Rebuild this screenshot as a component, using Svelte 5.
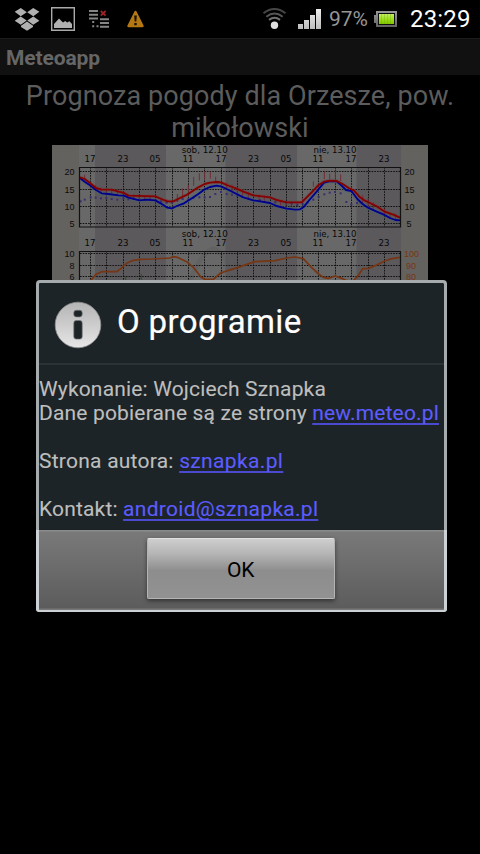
<script>
  const hours = [
    [90, '17'], [123, '23'], [155, '05'], [188, '11'], [221, '17'],
    [253.5, '23'], [286, '05'], [318, '11'], [351, '17'], [384, '23']
  ];
  const gridX = [90.5, 106.5, 123.5, 139.5, 155.5, 172.5, 188.5, 204.5, 221.5, 237.5, 253.5, 270.5, 286.5, 302.5, 318.5, 335.5, 351.5, 368.5, 384.5];
  const temps = [[171.5, '20'], [189.5, '15'], [206.5, '10'], [223.5, '5']];
  const humid = [[253.5, '10', '100'], [265.5, '8', '90'], [276.5, '6', '80']];

  // Curves are sampled at three units per pixel, measured from (40, 140).
  const red = '120,112 134,117 150,129 168,144 185,149 215,149 236,155 252,159 266,167 346,169 364,177 382,184 400,184 414,177 443,163 475,142 494,132 510,128 530,126 543,127 560,135 590,146 610,155 640,166 690,172 710,180 740,187 785,187 800,172 820,152 836,135 852,125 870,122 890,123 908,132 926,144 942,152 958,170 975,182 990,189 1010,199 1034,215 1060,224 1080,233';
  const blue = '120,114 134,125 150,136 168,150 185,160 205,162 236,166 252,167 266,173 298,181 320,179 346,181 362,190 382,203 396,205 410,198 432,190 451,178 475,162 494,148 510,141 530,137 543,139 560,147 590,162 610,172 640,181 690,189 710,198 740,206 765,209 780,208 790,202 808,180 830,155 852,128 870,123 890,124 904,136 918,150 934,153 952,177 968,192 984,203 1010,215 1030,223 1050,234 1066,240 1080,241';
  const orange = '150,424 168,403 185,395 230,395 240,388 260,370 280,361 300,358 340,357 390,354 400,350 412,352 440,365 460,382 482,410 494,418 520,418 542,399 575,388 595,382 620,373 645,365 705,362 740,354 765,351 790,356 812,380 836,402 850,412 865,415 885,408 908,416 920,422 938,424 952,410 968,386 986,385 1005,377 1034,363 1055,356 1080,352';
  const dots = [[122, 184], [134, 179], [152, 172], [167, 173], [183, 175], [199, 174], [215, 177], [232, 179], [250, 175], [265, 178], [281, 175], [298, 179], [314, 179], [330, 178], [347, 181], [363, 184], [380, 188], [395, 188], [412, 182], [428, 177], [445, 178], [460, 174], [478, 172], [494, 172], [510, 171], [526, 162], [543, 156], [560, 162], [576, 164], [592, 168], [625, 175], [660, 180], [706, 186], [738, 188], [755, 191], [772, 195], [788, 192], [803, 187], [820, 179], [836, 171], [853, 163], [869, 158], [885, 156], [902, 160], [919, 186], [934, 194], [951, 189]];
  const bars = [[134, 104, 117], [167, 136, 150], [183, 142, 155], [199, 148, 164], [215, 147, 166], [232, 148, 166], [281, 163, 180], [298, 168, 182], [314, 167, 182], [330, 167, 181], [365, 173, 188], [380, 178, 190], [412, 162, 178], [428, 145, 171], [445, 135, 163], [461, 111, 138], [478, 100, 122], [494, 93, 118], [511, 95, 116], [527, 110, 125], [560, 128, 145], [576, 134, 155], [592, 142, 162], [608, 148, 167], [625, 156, 175], [657, 164, 184], [673, 166, 188], [706, 174, 194], [722, 180, 197], [738, 183, 198], [754, 185, 199], [771, 186, 198], [788, 176, 190], [820, 124, 140], [853, 95, 117], [869, 101, 117], [886, 91, 119], [902, 103, 123], [934, 140, 155], [968, 166, 190], [984, 175, 202], [1000, 187, 208], [1034, 206, 224], [1050, 220, 237], [1066, 221, 239]];
</script>

<div class="screen">
  <header class="status">
    <svg width="260" height="38" viewBox="0 0 260 38">
      <g fill="#b0b0b0">
        <path d="M20.8 8 26.8 12.2 20.7 16.2 14.7 11.8zM33.2 8 27.2 12.2 33.3 16.2 39.4 11.8zM20.7 16.4 26.7 20.6 20.8 24.7 14.7 20.7zM33.3 16.4 27.3 20.6 33.2 24.7 39.4 20.7zM27 21.4 33 25.8V27L27 30.8 21 27V25.8z" />
        <path fill="none" stroke="#aaa" stroke-width="1.4" d="M51.7 7.7h22.6v22.6H51.7z" />
        <path d="M54 28v-4l5-5.5 4 4 2.2-1.4 2 1.3 2.2-1.2L72 24v4z" />
      </g>
      <path stroke="#858585" stroke-width="1.9" d="M89 11h9M89 14.8h9M89 18.5h9M100 19.3h9M100 23h9M100 26.7h9" />
      <path fill="#858585" d="M92.2 21h2v2h-2zM92.2 25.3h2v2h-2zM96.5 25.3h2v2h-2z" />
      <path d="m100.8 11 4.8 4.6M105.6 11 100.8 15.6" stroke="#982626" stroke-width="1.9" />
      <path d="M135.5 12 142.5 26h-14z" fill="#b47813" stroke="#b47813" stroke-width="2.4" stroke-linejoin="round" />
      <path d="M134.2 15.5h2.6l-.5 6h-1.6zM134.3 23h2.4v2.2h-2.4z" fill="#151000" />
    </svg>
    <svg width="64" height="38" viewBox="260 0 64 38">
      <defs>
        <linearGradient id="bar" x2="0" y2="1"><stop stop-color="#eee" /><stop offset="1" stop-color="#bbb" /></linearGradient>
      </defs>
      <g fill="none" stroke-width="2">
        <path d="M263.5 13.2q11-8.5 22 0" stroke="#464646" />
        <path d="M266.3 16.7q8.2-6.4 16.4 0" stroke="#555" />
        <path d="M269 19.9q5.5-4.2 11 0" stroke="#707070" />
      </g>
      <circle cx="274.5" cy="25.3" r="3.7" fill="#e0e0e0" />
      <path fill="url(#bar)" d="M298 24h5v5h-5zM304 20h5v9h-5zM310 15h5v14h-5zM316 9h5v20h-5z" />
    </svg>
    <span class="percent">97%</span>
    <svg width="24" height="38" viewBox="374 0 24 38">
      <defs>
        <linearGradient id="cell" x2="0" y2="1"><stop stop-color="#c5ee6a" /><stop offset=".5" stop-color="#9fdf1e" /><stop offset="1" stop-color="#83c400" /></linearGradient>
        <linearGradient id="case" x2="0" y2="1"><stop stop-color="#999" /><stop offset="1" stop-color="#626262" /></linearGradient>
      </defs>
      <path fill="url(#case)" d="M376 11h21v16h-21v-4h-2v-8h2z" />
      <path d="M378 13h17v12h-17z" fill="#101010" />
      <path d="M379 14h15v10h-15z" fill="url(#cell)" />
      <path d="M381.5 14v10M384.5 14v10M387.5 14v10M390.5 14v10" stroke="#6fae00" stroke-opacity=".35" />
    </svg>
    <span class="clock">23:29</span>
  </header>
  <div class="title">Meteoapp</div>
  <main>
    <h1>Prognoza pogody dla Orzesze, pow.<br />mikołowski</h1>
    <svg class="chart" width="376" height="140" viewBox="52 145 376 140">
      <path fill="#64625f" d="M52 145h376v140H52z" />
      <path fill="#686868" d="M79 145h322v140H79z" />
      <path fill="#5b595c" d="M95 145h71v140H95zM225.5 145h71.5v140h-71.5zM356.5 145h44.5v140h-44.5z" />
      <path d="M188 285q14-35 26-36 12 4 22 36" fill="none" stroke="#555" stroke-opacity=".3" stroke-width="5" />
      <g stroke="#111" stroke-width="1" stroke-dasharray="1.6 1.1">
        {#each gridX as x}<path d="M{x} 167v60M{x} 251v34" />{/each}
        {#each temps as [y]}<path d="M80 {y}h321" />{/each}
        {#each humid as [y]}<path d="M80 {y}h321" />{/each}
      </g>
      <g transform="translate(40 140) scale(.33333)" fill="none" stroke-linejoin="round">
        <polyline points={blue} stroke="#456575" stroke-opacity=".4" stroke-width="13" />
        <polyline points={red} stroke="#704444" stroke-opacity=".35" stroke-width="11" />
        {#each bars as [x, a, b]}<path d="M{x} {a}V{b}" stroke="#702d34" stroke-width="3" />{/each}
        {#each dots as [x, y]}<path d="M{x - 3} {y}h6" stroke="#38306e" stroke-width="6" />{/each}
        <polyline points={blue} stroke="#00008c" stroke-width="5.5" />
        <polyline points={red} stroke="#860000" stroke-width="5.5" />
        <polyline points={orange} stroke="#763513" stroke-width="5.2" />
        <path d="M257 410v14M304 402v20" stroke="#165c16" stroke-width="3" />
      </g>
      <path d="M79.5 285V251.5h321V285M79.5 167.5h321v59.5h-321z" fill="none" stroke="#111" stroke-width="1.2" />
      <g class="labels" text-anchor="middle">
        {#each [153, 237] as y}
          <text x="204.7" {y} textLength="46" lengthAdjust="spacingAndGlyphs">sob, 12.10</text>
          <text x="335" {y} textLength="43" lengthAdjust="spacingAndGlyphs">nie, 13.10</text>
          {#each hours as [x, h]}<text {x} y={y + 9} textLength="11" lengthAdjust="spacingAndGlyphs">{h}</text>{/each}
        {/each}
      </g>
      <g class="scale">
        {#each temps as [y, t]}
          <text x="74.5" y={y + 3} text-anchor="end">{t}</text>
          <text x={t === '5' ? 406.5 : 404.5} y={y + 3}>{t}</text>
        {/each}
        {#each humid as [y, l, r]}
          <text x="74.5" y={y + 3} text-anchor="end">{l}</text>
          <text class="warm" x={r === '100' ? 404 : 406} y={y + 3} textLength={r === '100' ? 15 : 10}>{r}</text>
        {/each}
      </g>
    </svg>
  </main>

  <section class="dialog" role="dialog" aria-label="O programie">
    <div class="head">
      <svg width="48" height="48" viewBox="0 0 48 48">
        <defs>
          <linearGradient id="disc" x2="0" y2="1"><stop stop-color="#b4b4b4" /><stop offset="1" stop-color="#e6e6e6" /></linearGradient>
        </defs>
        <circle cx="24" cy="24" r="22.8" fill="url(#disc)" stroke="#8f9192" stroke-width=".8" />
        <rect x="19.8" y="9.3" width="8.4" height="6.6" rx="2.4" fill="#1d2427" stroke="#777" stroke-width=".7" />
        <rect x="19.8" y="19.5" width="8.4" height="18.6" rx="2.4" fill="#1d2427" stroke="#777" stroke-width=".7" />
      </svg>
      <h2>O programie</h2>
    </div>
    <div class="body">
      <p>Wykonanie: Wojciech Sznapka</p>
      <p>Dane pobierane są ze strony <a href="#meteo">new.meteo.pl</a></p>
      <p class="gap site">Strona autora: <a class="author" href="#autor">sznapka.pl</a></p>
      <p class="gap">Kontakt: <a class="mail" href="#kontakt">android@sznapka.pl</a></p>
    </div>
    <div class="foot"><button>OK</button></div>
  </section>
</div>

<style>
  :global(body) { background: #000; }
  .screen {
    position: relative;
    width: 480px;
    height: 854px;
    overflow: hidden;
    background: #000;
    font-family: Roboto, sans-serif;
  }
  .status { display: flex; height: 38px; align-items: center; color: #fff; }
  .status svg { flex: none; }
  .percent { width: 45px; margin-left: 5px; color: #969696; font-size: 21px; line-height: 40px; white-space: nowrap; }
  .clock { margin-left: 12px; font-size: 24px; line-height: 40px; letter-spacing: .15px; }
  .title {
    box-sizing: border-box;
    height: 37px;
    padding-left: 6px;
    border-top: 1px solid #1b1b1b;
    background: #111;
    color: #666;
    font-size: 21px;
    font-weight: 700;
    line-height: 38px;
    letter-spacing: -.12px;
  }
  main { display: flex; flex-direction: column; align-items: center; padding-top: 5px; }
  h1 { height: 65px; margin: 0; color: #5c5c5c; font-size: 27px; font-weight: 400; line-height: 32px; letter-spacing: .09px; text-align: center; white-space: nowrap; }
  .chart { display: block; }
  .labels, .scale { font-family: "DejaVu Sans", sans-serif; font-size: 9.5px; fill: #080808; }
  .scale { font-family: "Liberation Sans", sans-serif; font-size: 9px; fill: #0c0c0c; }
  .scale .warm { fill: #7a3512; }
  .dialog {
    position: absolute;
    top: 280px;
    left: 36px;
    box-sizing: border-box;
    width: 411px;
    height: 332px;
    border: 3px solid #a6abae;
    border-bottom: 0;
    border-radius: 4px;
    background: #1d2427;
  }
  .head { display: flex; box-sizing: border-box; height: 82px; padding: 18px 0 0 15px; border-bottom: 2px solid #2c3336; }
  h2 { margin: 0 0 0 15px; color: #fff; font-size: 33px; font-weight: 400; line-height: 41px; letter-spacing: .36px; white-space: nowrap; -webkit-text-stroke: .2px #fff; }
  .body { box-sizing: border-box; height: 165px; padding-top: 12px; color: #bebebe; font-size: 21px; line-height: 24px; letter-spacing: .17px; white-space: nowrap; -webkit-text-stroke: .1px; }
  p { height: 24px; margin: 0; }
  .gap { margin-top: 24px; }
  a { color: #5c5cff; text-decoration: underline #4a4ad0; text-decoration-thickness: 1.5px; text-underline-offset: 3px; text-decoration-skip-ink: none; }
  .site { letter-spacing: .24px; }
  .author { letter-spacing: .36px; }
  .mail { letter-spacing: .28px; }
  .foot {
    display: flex;
    justify-content: center;
    box-sizing: border-box;
    height: 82px;
    margin: 0 -3px;
    padding: 8px 1px 0 0;
    border: 3px solid #cbd1d4;
    border-top: 0;
    border-bottom-width: 2px;
    border-radius: 0 0 3px 3px;
    background: linear-gradient(#8b8b8b 0 1px, #797979 2px, #5c5c5c 78px, #777 79px);
  }
  button {
    width: 188px;
    height: 61px;
    padding: 0 1px 0 0;
    border: 1px solid #b4b4b4;
    border-top-color: #e2e2e2;
    border-radius: 2px;
    background: linear-gradient(#cecece, #b5b5b5 25%, #8d8d8d 54%, #929292);
    box-shadow: 0 2px 4px #222b;
    color: #000;
    font: 21px/62px Roboto, sans-serif;
    letter-spacing: -.4px;
  }
</style>
